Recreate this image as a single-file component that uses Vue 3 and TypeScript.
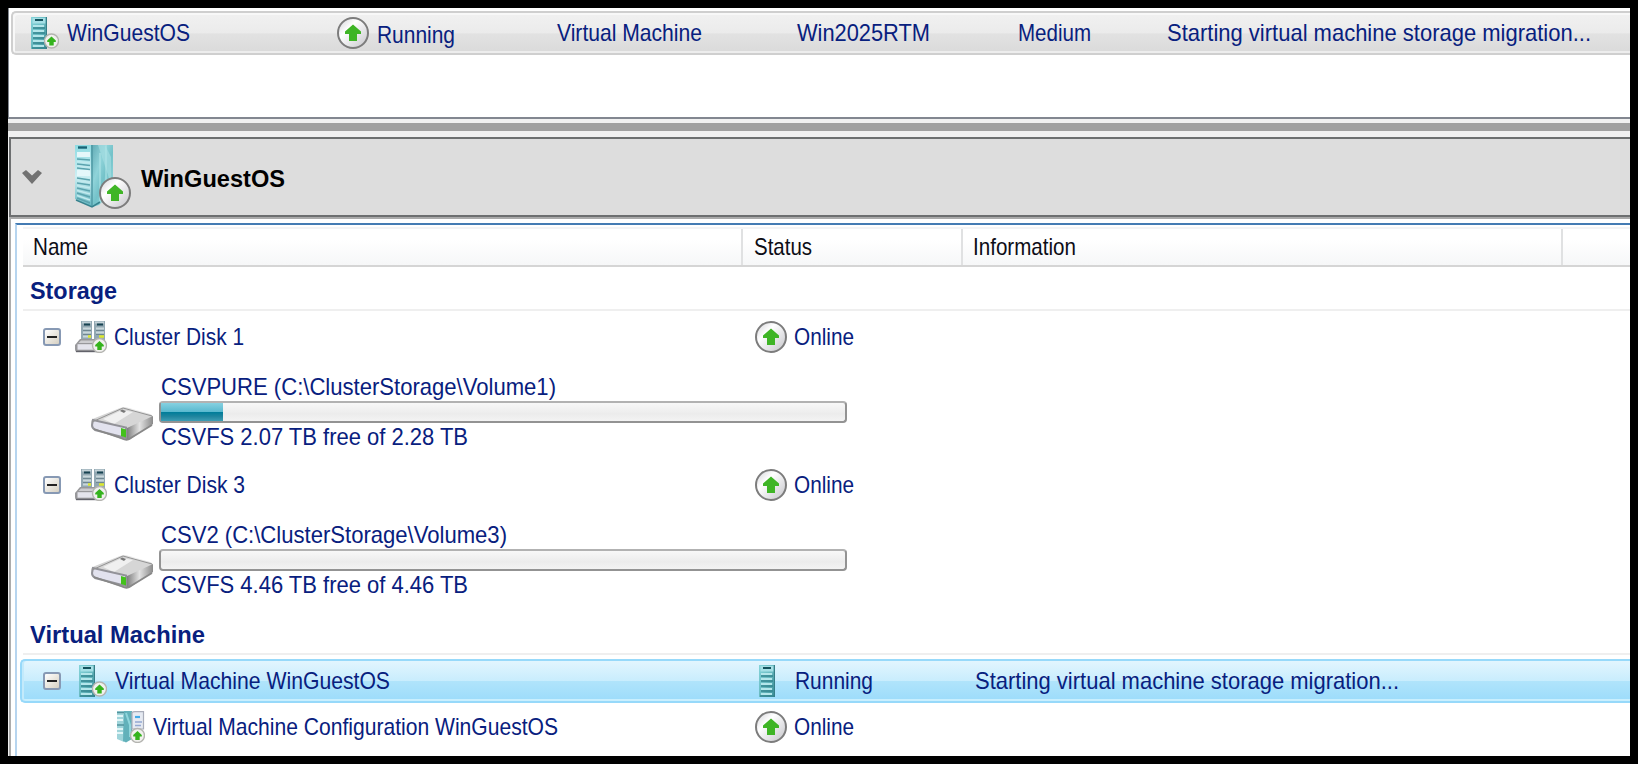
<script setup lang="ts">
import { h } from 'vue'

interface LabelProps {
  text: string
  w: number
}

/* Condensed label: the text is fitted to an exact advance width. */
const Label = (props: LabelProps) =>
  h('svg', { class: 'label', width: props.w, height: 30 }, [
    h('text', { x: 1, y: 23, textLength: props.w - 2, lengthAdjust: 'spacingAndGlyphs' }, props.text),
  ])
Label.props = ['text', 'w']

interface Disk {
  name: string
  nameW: number
  volume: string
  volumeW: number
  usage: string
  used: number
}

const disks: Disk[] = [
  { name: 'Cluster Disk 1', nameW: 132, volume: 'CSVPURE (C:\\ClusterStorage\\Volume1)', volumeW: 397, usage: 'CSVFS 2.07 TB free of 2.28 TB', used: 9.1 },
  { name: 'Cluster Disk 3', nameW: 133, volume: 'CSV2 (C:\\ClusterStorage\\Volume3)', volumeW: 348, usage: 'CSVFS 4.46 TB free of 4.46 TB', used: 0 },
]
</script>

<template>
  <div class="frame">
    <svg class="defs" width="0" height="0" aria-hidden="true">
      <defs>
        <linearGradient id="ball" x1="0" y1="0" x2="1" y2="1">
          <stop offset="0" stop-color="#cfcfd4" /><stop offset=".35" stop-color="#fff" />
          <stop offset=".6" stop-color="#e8e8ea" /><stop offset="1" stop-color="#c4c4c8" />
        </linearGradient>
        <linearGradient id="teal" x1="0" y1="0" x2="1" y2="1">
          <stop offset="0" stop-color="#84d4da" /><stop offset=".5" stop-color="#69bac1" /><stop offset="1" stop-color="#3a8e98" />
        </linearGradient>
        <linearGradient id="side" x1="0" y1="0" x2="1" y2="1">
          <stop offset="0" stop-color="#5fa9b3" /><stop offset=".35" stop-color="#8fd3d9" />
          <stop offset=".55" stop-color="#74c2c9" /><stop offset="1" stop-color="#a5e6e9" />
        </linearGradient>
        <linearGradient id="front" x1="0" y1="0" x2="0" y2="1">
          <stop offset="0" stop-color="#8fdbe2" /><stop offset=".5" stop-color="#cdeff3" /><stop offset="1" stop-color="#64b7c1" />
        </linearGradient>
        <linearGradient id="metal" x1="0" y1="0" x2="1" y2="1">
          <stop offset="0" stop-color="#b5b5b5" /><stop offset=".4" stop-color="#ededed" />
          <stop offset=".7" stop-color="#cfcfcf" /><stop offset="1" stop-color="#a5a5a5" />
        </linearGradient>
        <linearGradient id="rim" x1="0" y1="0" x2="1" y2="0">
          <stop offset="0" stop-color="#777" /><stop offset=".5" stop-color="#e2e2e2" /><stop offset="1" stop-color="#8a8a8a" />
        </linearGradient>
        <g id="up">
          <circle cx="16" cy="16" r="15" fill="url(#ball)" stroke="#7c7c7c" stroke-width="2" />
          <path d="M16 7.6 L24 14.6 V17 H20 V24 H12 V17 H8 V14.6 Z" fill="#3fb526" />
        </g>
        <g id="badge">
          <circle cx="7.5" cy="7.5" r="7" fill="#f1f1ee" stroke="#b4b4b0" stroke-width="1.4" />
          <path d="M7.5 3 L11.8 7 V8.5 H9.7 V12 H5.3 V8.5 H3.2 V7 Z" fill="#35b31d" />
        </g>
        <g id="rack">
          <rect width="16" height="32" fill="url(#teal)" />
          <rect x="1.5" y="1" width="13" height="5.5" fill="#a5dfe5" />
          <rect x="4" y="2" width="8" height="2" fill="#14525d" />
          <path d="M2 9H13M2 14H13M2 19H13M2 24H13M2 29H13" stroke="#b4e6ea" stroke-width="2" />
          <path d="M2 11H14M2 16H14M2 21H14M2 26H14M1 31H16" stroke="#34858f" stroke-width="1.4" />
          <path d="M15.4 0V32" stroke="#367f88" stroke-width="1.2" />
        </g>
        <g id="server"><use href="#rack" x="4" /><use href="#badge" x="17" y="16.5" /></g>
        <g id="cluster">
          <rect x="6" y="0" width="11" height="20" fill="#93a8b2" /><rect x="19" y="0" width="11" height="20" fill="#93a8b2" />
          <path d="M7 1.5H16M20 1.5H29" stroke="#c4d2d8" stroke-width="2" />
          <path d="M9 3.5H15M22 3.5H28" stroke="#174251" stroke-width="2" />
          <path d="M8 7.5H16M8 11.5H16M8 15.5H16M21 7.5H29M21 11.5H29" stroke="#c9d7db" stroke-width="2" />
          <path d="M8 13.5H16M21 13.5H29M8 9.5H16M21 9.5H29" stroke="#6f8792" stroke-width="1" />
          <path d="M13 15.5H16M24 15.5H29" stroke="#dce82c" stroke-width="2.4" />
          <path d="M5 18H26V31H2Q0 31 0 28V24Z" fill="#98989b" />
          <path d="M6 19.5H24V22H3.5Z" fill="#cdcdd0" /><rect x="2.5" y="23.2" width="18" height="5.5" fill="#e4e4ec" />
          <path d="M1 30.5H22" stroke="#62626a" stroke-width="1.4" />
          <use href="#badge" x="17" y="17" />
        </g>
        <g id="config">
          <path d="M0 0H7V31L0 28Z" fill="#9fd4da" /><path d="M7 0H15V28L9 31.5L6 30Z" fill="#62b1ba" />
          <path d="M0 1.5H7M0 14H7" stroke="#53929d" stroke-width="1.6" />
          <path d="M0 5H6M0 9H6M0 18H6M0 22H6" stroke="#e0f5f7" stroke-width="2" /><path d="M9 2L13 14V26" stroke="#8fd6dc" stroke-width="2" fill="none" />
          <path d="M15 1.5Q16 .6 18 .6H26.5V18H15Z" fill="#e6eaf2" stroke="#a9adba" stroke-width="1.2" />
          <path d="M18 6H23" stroke="#42a9e8" stroke-width="2.2" /><path d="M18 11H25M18 14.5H24" stroke="#92a8d2" stroke-width="1.6" />
          <use href="#badge" x="13" y="17" />
        </g>
      </defs>
    </svg>

    <section class="roles">
      <div class="role-row">
        <span class="c c-name"><svg width="32" height="32"><use href="#server" /></svg><Label text="WinGuestOS" :w="125" /></span>
        <span class="c c-status"><svg width="32" height="32"><use href="#up" /></svg><Label class="low" text="Running" :w="80" /></span>
        <span class="c c-type"><Label text="Virtual Machine" :w="147" /></span>
        <span class="c c-owner"><Label text="Win2025RTM" :w="135" /></span>
        <span class="c c-priority"><Label text="Medium" :w="75" /></span>
        <span class="c c-info"><Label text="Starting virtual machine storage migration..." :w="426" /></span>
      </div>
    </section>
    <div class="splitter"></div>

    <header class="title">
      <svg class="chevron" width="20" height="14" viewBox="0 0 20 14"><path d="M0 3L4 0L10 5.6L16 0L20 3L10 14Z" fill="#727272" /></svg>
      <svg class="tower" width="56" height="64" viewBox="0 0 56 64">
        <path d="M0 0H17V62L0 54Z" fill="url(#front)" />
        <path d="M16 0H38V46L24 60L17 62Z" fill="url(#side)" />
        <path d="M23 0L36 39V12L30 0Z" fill="#a4dde1" opacity=".7" /><path d="M25 8V58M31 0V38" stroke="#b2e6e9" stroke-width="1.5" opacity=".7" />
        <path d="M3 2.5H12" stroke="#176476" stroke-width="2.4" />
        <path d="M2 7H15V12H2ZM2 25H15V31H2Z" fill="#e5f7fa" />
        <path d="M2 14L15 15M2 19L15 20.5M2 23L15 24.5M2 33L15 35M2 38L15 40M2 43L15 46M2 48L15 52M2 53L15 58" stroke="#5ba3ae" stroke-width="1.4" />
        <path d="M2 16.5L15 18M2 21L15 22.5M2 35.5L15 37.5M2 40.5L15 43M2 45.5L15 49M2 50.5L15 55" stroke="#c2eaee" stroke-width="1.5" />
        <path d="M17 0V61" stroke="#4c97a3" stroke-width="1.4" /><path d="M1 55L17 62L25 57" stroke="#37828e" stroke-width="1.5" fill="none" />
        <use href="#up" x="24" y="32" />
      </svg>
      <Label class="bold" text="WinGuestOS" :w="146" />
    </header>

    <section class="detail">
      <div class="table">
        <div class="head">
          <span class="h h-name"><Label text="Name" :w="57" /></span>
          <span class="h h-status"><Label text="Status" :w="60" /></span>
          <span class="h h-info"><Label text="Information" :w="105" /></span>
        </div>

        <div class="group"><Label class="bold" text="Storage" :w="89" /></div>
        <template v-for="disk in disks" :key="disk.name">
          <div class="row">
            <span class="r-name">
              <i class="expander"></i>
              <svg class="ico" width="32" height="32"><use href="#cluster" /></svg>
              <Label class="disk" :text="disk.name" :w="disk.nameW" />
            </span>
            <span class="r-status"><svg width="32" height="32"><use href="#up" /></svg><Label text="Online" :w="62" /></span>
          </div>
          <div class="volume">
            <svg class="drive" width="63" height="34" viewBox="0 0 63 34">
              <path d="M0 15Q0 12 4 11L29 1Q33 -.5 38 1L59 7Q62 8 62 11V17L39 31Q36 34 32 32.5L4 23Q0 21.5 0 18Z" fill="url(#metal)" />
              <path d="M2 14L32 1.5L60 9L36 22Z" fill="#d6d6d6" /><path d="M12 12L31 3L42 5L23 17Z" fill="#f4f4f4" opacity=".85" />
              <path d="M31 2.5L35 4L33 6L29 4Z" fill="#787878" />
              <path d="M36 21L62 9V17L39 32.5L35 33Z" fill="url(#rim)" />
              <path d="M2 13L35 20.5V31L4 23Q1 21 1 18Z" fill="#e2e2ee" stroke="#929298" stroke-width="2" />
              <path d="M1 15L32 1L61 9" stroke="#929292" stroke-width="1" fill="none" />
              <path d="M3 22L31 31.5Q36 34 39 31.5L61 18" stroke="#888" stroke-width="1.8" fill="none" />
              <path d="M30 21L35 22.5V30.5L30 29Z" fill="#43c11b" />
            </svg>
            <div class="usage">
              <Label :text="disk.volume" :w="disk.volumeW" />
              <div class="bar"><div v-if="disk.used > 0" class="fill" :style="{ width: disk.used + '%' }"></div></div>
              <Label class="free" :text="disk.usage" :w="309" />
            </div>
          </div>
        </template>

        <div class="group"><Label class="bold" text="Virtual Machine" :w="177" /></div>
        <div class="row selected">
          <span class="r-name">
            <i class="expander"></i>
            <svg class="ico" width="32" height="32"><use href="#server" /></svg>
            <Label text="Virtual Machine WinGuestOS" :w="277" />
          </span>
          <span class="r-status"><svg width="32" height="32"><use href="#rack" x="4" /></svg><Label text="Running" :w="80" /></span>
          <span class="r-info"><Label text="Starting virtual machine storage migration..." :w="426" /></span>
        </div>
        <div class="row child">
          <span class="r-name">
            <svg class="conf" width="28" height="32"><use href="#config" /></svg>
            <Label text="Virtual Machine Configuration WinGuestOS" :w="407" />
          </span>
          <span class="r-status"><svg width="32" height="32"><use href="#up" /></svg><Label text="Online" :w="62" /></span>
        </div>
      </div>
    </section>
  </div>
</template>

<style>
body { margin: 0; background: #000; }
</style>

<style scoped>
.frame {
  box-sizing: border-box;
  width: 1638px;
  height: 764px;
  border: 8px solid #000;
  background: #f0f0f0;
  overflow: hidden;
  font-family: "Liberation Sans", Arial, sans-serif;
  display: flex;
  flex-direction: column;
}
.defs { position: absolute; }
svg { flex: none; display: block; }
.label { overflow: visible; font-size: 24px; fill: #08207e; }
.bold { font-weight: 700; }
.low { margin-top: 3px; }

.roles {
  box-sizing: border-box;
  flex: none;
  height: 111px;
  padding: 3px 0 0 2px;
  background: #fff;
  border-left: 1px solid #828790;
  border-bottom: 2px solid #828790;
}
.role-row {
  box-sizing: border-box;
  height: 44px;
  display: grid;
  grid-template-columns: 310px 220px 240px 220px 150px 1fr;
  padding-left: 14px;
  border: 2px solid #cfcfcf;
  border-right: 0;
  border-radius: 5px 0 0 5px;
  background: linear-gradient(#f1f1f1 0, #ebebeb 50%, #e2e2e2 52%, #dadada 100%);
  box-shadow: inset 2px 2px #f8f8f8, inset 0 -2px #ededed;
}
.c { display: flex; align-items: center; }
.c-name .label { margin-left: 7px; }
.c-status .label { margin-left: 7px; }
.c-type .label, .c-owner .label, .c-info .label { margin-left: -1px; }

.splitter { flex: none; height: 8px; margin: 4px 0 6px; background: #a0a0a0; }

.title {
  box-sizing: border-box;
  flex: none;
  height: 80px;
  margin-left: 1px;
  display: flex;
  align-items: center;
  background: #ddd;
  border: 2px solid #6d6f70;
  border-right: 0;
}
.chevron { margin-left: 11px; }
.tower { margin-left: 33px; }
.title .label { margin: 4px 0 0 9px; fill: #000; }

.detail {
  box-sizing: border-box;
  flex: none;
  height: 539px;
  margin-left: 1px;
  padding: 4px 0 0 4px;
  border-top: 2px solid #aaa;
  border-left: 2px solid #acacac;
  background: #fff;
}
.table { border-top: 2px solid #447bb3; border-left: 2px solid #b7d5ef; height: 533px; }
.head {
  box-sizing: border-box;
  height: 40px;
  margin: 2px 0 0 6px;
  display: flex;
  border-top: 2px solid #f4f4f5;
  border-bottom: 2px solid #d5d5d5;
  background: linear-gradient(#fff 30%, #f6f7f8);
}
.h {
  box-sizing: border-box;
  display: flex;
  align-items: center;
  padding-left: 10px;
  border-right: 2px solid #e0e1e2;
}
.h .label { fill: #0d0d16; }
.h-name { width: 720px; padding-left: 9px; }
.h-status { width: 220px; }
.h-info { width: 600px; padding-left: 9px; }

.group {
  box-sizing: border-box;
  height: 44px;
  margin-left: 6px;
  padding: 9px 0 0 6px;
  border-bottom: 2px solid #efefef;
}
.row {
  box-sizing: border-box;
  height: 44px;
  margin: 4px 0 0 3px;
  padding-left: 23px;
  display: grid;
  grid-template-columns: 712px 219px 1fr;
}
.volume + .row { margin-top: 0; }
.row > span { display: flex; align-items: center; }
.expander {
  box-sizing: border-box;
  width: 18px;
  height: 18px;
  border: 2px solid #8799b4;
  border-radius: 3px;
  background: linear-gradient(#222, #222) center / 10px 2px no-repeat, linear-gradient(135deg, #fff, #d6d0c2);
}
.ico { margin-left: 14px; }
.r-name .label { margin-left: 7px; }
.r-name .disk { margin-left: 6px; }
.r-status .label { margin-left: 6px; }
.selected {
  padding-left: 21px;
  border: 2px solid #97d9fa;
  border-right: 0;
  border-radius: 5px 0 0 5px;
  background: linear-gradient(#e2f5fe 0, #c9edfd 49%, #b0e4fb 51%, #9cdcfb 100%);
  box-shadow: inset 2px 0 #c3eafb, inset 0 -2px #c9effe;
}
.selected .r-status .label { margin-left: 7px; }
.child { margin-top: 2px; }
.conf { margin-left: 74px; }

.volume { height: 104px; display: flex; padding: 13px 0 0 74px; box-sizing: border-box; }
.drive { margin-top: 35px; }
.usage { margin-left: 5px; width: 688px; }
.usage .label { margin-left: 1px; }
.bar {
  box-sizing: border-box;
  height: 22px;
  margin-top: -1px;
  border: 2px solid #939393;
  border-top-color: #b2b2b2;
  border-radius: 4px;
  background: linear-gradient(#f8f8f8, #ececec 60%, #f3f3f3);
}
.fill { height: 100%; background: linear-gradient(#86d1e1 0, #5bb9cf 48%, #007d9a 52%, #20859e 75%, #3d9db4 100%); }
.usage .free { margin-top: -1px; }
</style>
